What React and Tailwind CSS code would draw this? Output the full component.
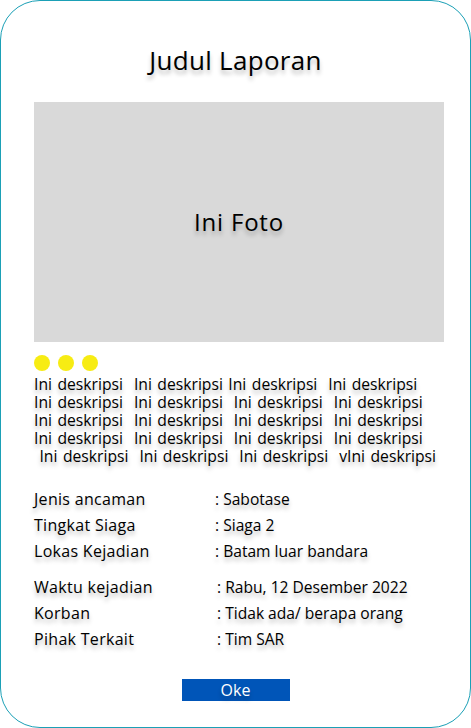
const descLines = [
  'Ini deskripsi  Ini deskripsi Ini deskripsi  Ini deskripsi',
  'Ini deskripsi  Ini deskripsi  Ini deskripsi  Ini deskripsi',
  'Ini deskripsi  Ini deskripsi  Ini deskripsi  Ini deskripsi',
  'Ini deskripsi  Ini deskripsi  Ini deskripsi  Ini deskripsi',
  ' Ini deskripsi  Ini deskripsi  Ini deskripsi  vIni deskripsi',
];

const groupOne = [
  ['Jenis ancaman', ': Sabotase'],
  ['Tingkat Siaga', ': Siaga 2'],
  ['Lokas Kejadian', ': Batam luar bandara'],
];

const groupTwo = [
  ['Waktu kejadian', ': Rabu, 12 Desember 2022'],
  ['Korban', ': Tidak ada/ berapa orang'],
  ['Pihak Terkait', ': Tim SAR'],
];

const shadow = '[text-shadow:0_4px_4px_rgba(0,0,0,0.25)]';

const InfoRow = ({ label, value, valueClass }) => (
  <div className="flex h-[26px] items-baseline leading-[26px]">
    <span className={`w-[181px] shrink-0 tracking-[0.3px] ${shadow}`}>{label}</span>
    <span className={`text-[15.6px] ${valueClass} ${shadow}`}>{value}</span>
  </div>
);

export default function App() {
  return (
    <div className="w-[471px] h-[728px] bg-white font-['Open_Sans',sans-serif] text-black">
      <div className="flex h-full flex-col rounded-[40px] border border-[#1ba0b6] px-[33px] pt-[42px]">
        <h1 className={`text-center text-[26px] leading-[34px] tracking-[0.3px] ${shadow}`}>Judul Laporan</h1>

        <div className="mt-[25px] flex h-[240px] w-[410px] items-center justify-center bg-[#d9d9d9]">
          <span className={`text-[24px] tracking-[0.8px] ${shadow}`}>Ini Foto</span>
        </div>

        <div className="mt-[13px] flex gap-[8px]">
          <span className="h-[16px] w-[16px] rounded-full bg-[#f7ec13]" />
          <span className="h-[16px] w-[16px] rounded-full bg-[#f7ec13]" />
          <span className="h-[16px] w-[16px] rounded-full bg-[#f7ec13]" />
        </div>

        <div className="mt-[4px] text-[15.7px] leading-[18px] [word-spacing:1.4px]">
          {descLines.map((line, i) => (
            <p key={i} className={`h-[18px] whitespace-pre ${shadow}`}>{line}</p>
          ))}
        </div>

        <div className="mt-[21px] text-[16px]">
          {groupOne.map(([label, value]) => (
            <InfoRow key={label} label={label} value={value} valueClass="" />
          ))}
        </div>
        <div className="mt-[10px] text-[16px]">
          {groupTwo.map(([label, value]) => (
            <InfoRow key={label} label={label} value={value} valueClass="pl-[2px]" />
          ))}
        </div>

        <div className="mt-[27px] flex justify-center">
          <button className={`h-[22px] w-[108px] bg-[#0055b8] text-[16px] leading-[22px] text-white ${shadow}`}>
            Oke
          </button>
        </div>
      </div>
    </div>
  );
}
